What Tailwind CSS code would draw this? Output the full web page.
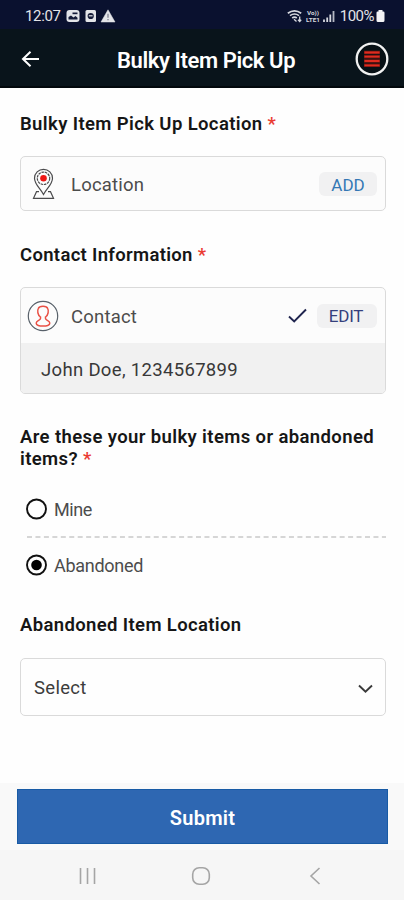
<!DOCTYPE html>
<html lang="en">
<head>
<meta charset="utf-8">
<meta name="viewport" content="width=device-width, initial-scale=1">
<title>Bulky Item Pick Up</title>
<script src="https://cdn.jsdelivr.net/npm/@tailwindcss/browser@4"></script>
</head>
<body class="bg-[#fefefe] font-['Roboto',sans-serif] text-[#161616]">
<div class="flex h-[900px] w-[404px] flex-col overflow-hidden">
  <div class="flex h-[29px] shrink-0 items-center bg-[#0a112f] pt-[2px] pr-[19px] pl-[25px] text-[#e3e4e8]">
    <span class="text-[15px] leading-[18px] tracking-[-0.35px]">12:07</span>
    <svg class="ml-[5px]" width="50" height="14" viewBox="0 0 50 14" fill="#e3e4e8">
      <rect x="0.5" y="1" width="13" height="12" rx="3"/>
      <path d="M2.500 10.500V8L5 6.500l2.500 2 2-1.500 2 1.800v1.700z" fill="#151b38"/><path d="M6.500 3.500h5v1.700h-5z" fill="#151b38"/>
      <rect x="19.500" y="1" width="10.500" height="12" rx="1.500"/>
      <circle cx="24.700" cy="7" r="3.100" fill="#151b38"/><path d="M22.800 6.200h3.800v1.200h-3.800z"/>
      <path d="M42 .8 49 13H35z" stroke="#e3e4e8" stroke-linejoin="round" stroke-width=".5"/><path d="M41.400 4.700h1.200v4h-1.200zM41.400 10h1.200v1.300h-1.200z" fill="#777b8a"/>
    </svg>
    <svg class="ml-auto" width="49" height="14" viewBox="0 0 49 14" fill="none" stroke="#d6d8df">
      <path d="M.8 4.200Q7.500-.6 14.200 4.200M3 6.600Q7.500 3.400 12 6.600M5.200 9Q7.500 7.200 9.800 9" stroke-width="1.700"/>
      <path d="M7 10.200 9.500 12.500M12.700 7.500v5m-1.700-1.700 1.700 1.700 1.500-1.700" stroke-width="1.300"/>
      <text x="20" y="6" fill="#d6d8df" stroke="none" font-size="5.500" font-weight="700" textLength="12" lengthAdjust="spacingAndGlyphs">Vo))</text>
      <text x="19" y="12.800" fill="#d6d8df" stroke="none" font-size="5.500" font-weight="700" textLength="14" lengthAdjust="spacingAndGlyphs">LTE1</text>
      <path d="M37 10.500v2.500M40.200 8.500v4.500M43.300 5.500v7.500" stroke-width="1.800"/><path d="M46.500 2v11" stroke-width="1.800" stroke="#b5b8c4"/>
    </svg>
    <span class="ml-[4px] text-[15px] leading-[18px] tracking-[-0.5px]">100%</span>
    <svg class="ml-[2px]" width="9" height="14" viewBox="0 0 9 14" fill="#f3f3f5"><path d="M2.500 1h4v1.500h.8q1.200 0 1.200 1.200v7.800q0 1.500-1.500 1.500H2Q.5 13 .5 11.500V3.700q0-1.200 1.200-1.200h.8z"/></svg>
  </div>
  <header class="flex h-[59px] shrink-0 items-center border-b-2 border-[#02080c] bg-[#09141b] pt-[3px] pr-[15px] pl-[21px]">
    <svg width="20" height="18" viewBox="0 0 20 18" fill="none" stroke="#fff" stroke-width="2"><path d="M18 9H2M9.500 1.800 2 9l7.500 7.200"/></svg>
    <h1 class="mt-[3px] ml-[76px] text-[22px] leading-[26px] font-semibold tracking-[-0.4px] whitespace-nowrap text-white">Bulky Item Pick Up</h1>
    <svg class="ml-auto" width="34" height="34" viewBox="0 0 34 34" fill="none"><circle cx="17" cy="17" r="15.300" fill="#071015" stroke="#f1f1f1" stroke-width="2.300"/><path d="M9 10.500h16M9 14.700h16M9 19h16M9 23.300h16" stroke="#711611" stroke-width="3.500"/><path d="M9.500 10.500h15M9.500 14.700h15M9.500 19h15M9.500 23.300h15" stroke="#df2c20" stroke-width="1.800"/></svg>
  </header>
  <main class="flex flex-1 flex-col pr-[18px] pl-5">
    <h2 class="mt-[25px] text-[18.500px] leading-[22px] font-semibold tracking-[0.38px] whitespace-nowrap">Bulky Item Pick Up Location <span class="text-[#ea3b32]">*</span></h2>
    <div class="mt-[21px] flex h-[55px] items-center rounded-[5px] border border-[#dadada] bg-[#fcfcfc] pr-[8px] pl-[11px]">
      <svg width="24" height="32" viewBox="0 0 24 32" fill="none" stroke="#4b4b4d" stroke-width="1.200"><path d="M11.500 26.500C8.500 20.500 2.500 16.500 2.500 10.300a9 9 0 0 1 18 0c0 6.200-6 10.200-9 16.200z"/><circle cx="11.500" cy="10.300" r="6.200" stroke-dasharray="2.500 .8"/><circle cx="11.500" cy="10.300" r="3.300" fill="#ee1715" stroke="none"/><path d="M7 23.700H4.500L1.500 30.300h20l-3-6.600H16M1 30.400h21"/></svg>
      <span class="mt-[2px] ml-[15px] text-[18.500px] leading-[22px] tracking-[0.2px] text-[#4c4c4c]">Location</span>
      <button class="ml-auto h-[24px] w-[58px] rounded-[6px] bg-[#f1f1f2] pt-[2px] text-[17px] leading-[22px] text-[#3478b5]">ADD</button>
    </div>
    <h2 class="mt-[33px] text-[18.500px] leading-[22px] font-semibold tracking-[0.32px] whitespace-nowrap">Contact Information <span class="text-[#ea3b32]">*</span></h2>
    <div class="mt-[21px] h-[107px] overflow-hidden rounded-[5px] border border-[#dadada] bg-[#fcfcfc]">
      <div class="flex h-[55px] items-center pr-[8px] pl-[6px]">
        <svg width="32" height="32" viewBox="0 0 32 32" fill="none"><circle cx="16" cy="16" r="14.700" stroke="#58616a" stroke-width="1.200"/><path d="M13.500 18.500V17C10.500 15 10.200 10.500 11.300 8.500 12.300 5.500 19.700 5.500 20.700 8.500 21.800 10.500 21.500 15 18.500 17v1.500c0 2 4 1.800 4.300 4.500.1 2.500-3.300 3-6.800 3s-6.900-.5-6.800-3c.3-2.700 4.300-2.500 4.300-4.500z" stroke="#e95045" stroke-width="1.500"/></svg>
        <span class="mt-[2px] ml-[12px] text-[18.500px] leading-[22px] tracking-[0.2px] text-[#4c4c4c]">Contact</span>
        <svg class="ml-auto" width="20" height="16" viewBox="0 0 20 16" fill="none" stroke="#20254f" stroke-width="1.900"><path d="m1 8.500 5.200 5L18 1.500"/></svg>
        <button class="ml-[9px] h-[24px] w-[60px] rounded-[6px] bg-[#f1f1f2] pr-[2px] text-[17px] leading-[24px] tracking-[-0.2px] text-[#353f7c]">EDIT</button>
      </div>
      <div class="flex h-[50px] items-center bg-[#f1f1f1] pt-[4px] pl-[20px] text-[18.500px] leading-[22px] tracking-[0.33px] text-[#383838]">John Doe, 1234567899</div>
    </div>
    <h2 class="mt-[32px] text-[18.500px] leading-[22px] font-semibold tracking-[0.38px]"><span class="block whitespace-nowrap">Are these your bulky items or abandoned</span>items? <span class="text-[#ea3b32]">*</span></h2>
    <div class="mt-[28px] flex h-[22px] items-center gap-[7px] pl-[6px]">
      <svg width="21" height="22" viewBox="0 0 21 22" fill="none"><circle cx="10.500" cy="11" r="9.500" stroke="#111" stroke-width="1.900"/></svg>
      <span class="mt-[2px] text-[18px] leading-[22px] tracking-[-0.4px] text-[#4c4c4c]">Mine</span>
    </div>
    <svg class="mt-[16px] ml-[7px]" width="359" height="2" viewBox="0 0 359 2"><path d="M0 1h359" stroke="#c9c9c9" stroke-width="1.500" stroke-dasharray="5 3.450"/></svg>
    <div class="mt-[16px] flex h-[22px] items-center gap-[7px] pl-[6px]">
      <svg width="21" height="22" viewBox="0 0 21 22" fill="none"><circle cx="10.500" cy="11" r="9.500" stroke="#111" stroke-width="1.900"/><circle cx="10.500" cy="11" r="5.300" fill="#000"/></svg>
      <span class="mt-[2px] text-[18px] leading-[22px] tracking-[-0.28px] text-[#4c4c4c]">Abandoned</span>
    </div>
    <h2 class="mt-[38px] text-[18.500px] leading-[22px] font-semibold tracking-[0.36px] whitespace-nowrap">Abandoned Item Location</h2>
    <div class="mt-[22px] flex h-[58px] items-center justify-between rounded-[5px] border border-[#dadada] bg-[#fefefe] pr-[12px] pl-[13px]">
      <span class="mt-px text-[18.500px] leading-[22px] tracking-[0.3px] text-[#3c3c3c]">Select</span>
      <svg class="mt-[3px]" width="15" height="10" viewBox="0 0 15 10" fill="none" stroke="#3a3a3a" stroke-width="1.900"><path d="m1 1.500 6.500 6.300L14 1.500"/></svg>
    </div>
  </main>
  <footer class="h-[67px] shrink-0 bg-[#f9f9f9] pt-[6px] pr-[16px] pl-[17px]">
    <button class="block h-[55px] w-full border border-[#185ba5] bg-[#2e67b2] pt-[2px] text-[20px] leading-[24px] font-semibold tracking-[0.25px] text-white">Submit</button>
  </footer>
  <nav class="flex h-[50px] shrink-0 items-center bg-[#f6f6f6] pt-px pl-[79px]">
    <svg width="18" height="18" viewBox="0 0 18 18" stroke="#a5a5a5" stroke-width="1.600"><path d="M1.500 1v16M8.500 1v16M15.500 1v16"/></svg>
    <svg class="ml-[94px]" width="20" height="20" viewBox="0 0 20 20" fill="none" stroke="#a5a5a5" stroke-width="1.600"><rect x="1.700" y="1.700" width="16.600" height="16.600" rx="6.500"/></svg>
    <svg class="ml-[98px]" width="12" height="18" viewBox="0 0 12 18" fill="none" stroke="#a5a5a5" stroke-width="1.600"><path d="M10.500 1 2 9l8.500 8"/></svg>
  </nav>
</div>
</body>
</html>
